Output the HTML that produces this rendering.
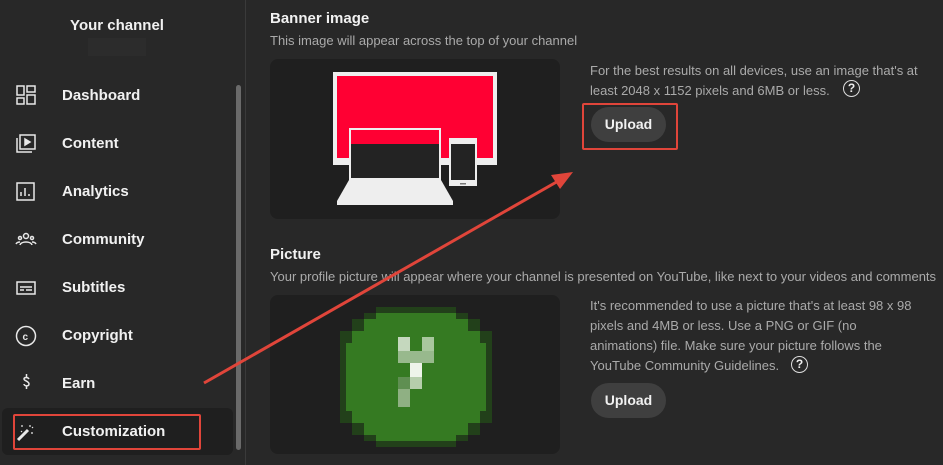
<!DOCTYPE html>
<html><head><style>
*{margin:0;padding:0;box-sizing:border-box}
body{width:943px;height:465px;background:#282828;font-family:"Liberation Sans",sans-serif;position:relative;overflow:hidden;color:#f1f1f1}
.a{position:absolute}
.nav{font-size:15px;font-weight:bold;left:62px;color:#f1f1f1}
.sub{font-size:13px;color:#aaa}
.h{font-size:15px;font-weight:bold}
.btn{background:#3f3f3f;border-radius:18px;width:75px;height:35px;font-weight:bold;font-size:14px;text-align:center;line-height:35px;color:#f1f1f1}
.box{background:#1f1f1f;border-radius:8px}
.red{border:2px solid #e0453a;border-radius:2px}
</style></head><body>
<div class="a" style="left:245px;top:0;width:1px;height:465px;background:#3a3a3a"></div>
<div class="a h" style="left:0;width:234px;text-align:center;top:17px">Your channel</div>
<div class="a" style="left:88px;top:38px;width:58px;height:18px;background:#2c2c2c"></div>
<div class="a" style="left:236px;top:85px;width:5px;height:365px;background:#6a6a6a;border-radius:3px"></div>
<div class="a" style="left:2px;top:408px;width:231px;height:47px;background:#1f1f1f;border-radius:6px"></div>
<svg class="a" style="left:0;top:0" width="245" height="465" fill="none" stroke="#e8e8e8" stroke-width="1.5">
<rect x="17" y="86" width="7" height="9"/><rect x="17" y="98" width="7" height="6"/><rect x="27" y="86" width="8" height="6"/><rect x="27" y="95" width="8" height="9"/>
<rect x="20" y="135" width="15" height="14"/><path d="M17 138v14h15"/><path d="M25 139l5 3-5 3z" fill="#e8e8e8"/>
<rect x="17" y="183" width="17" height="17"/><path d="M21 196v-4M25 196v-8M29 196v-2"/>
<circle cx="26" cy="236" r="2.5"/><path d="M20 245c1-4 11-4 12 0"/><circle cx="20" cy="238" r="1.5"/><circle cx="32" cy="238" r="1.5"/><path d="M16 244c1-2 3-2 4-2M36 244c-1-2-3-2-4-2"/>
<rect x="17" y="282" width="18" height="12"/><path d="M20 287h12M20 290h4M26 290h6"/>
<circle cx="26" cy="336" r="9.5"/><text x="22.5" y="340" font-size="10" fill="#e8e8e8" stroke="none" font-family="Liberation Sans" font-weight="bold">c</text>
<path d="M29 379c-1-2-5-2-5 0s5 2 5 5-5 2-5 0M26.5 374v3M26.5 386v3"/>
<path d="M18 440l10-10" stroke-width="3"/><path d="M22 425v2M30 425v2M33 433h-2M21 431l1 1M33 427l-1 1" stroke-width="1.2"/>
</svg>
<div class="a nav" style="top:87px">Dashboard</div>
<div class="a nav" style="top:135px">Content</div>
<div class="a nav" style="top:183px">Analytics</div>
<div class="a nav" style="top:231px">Community</div>
<div class="a nav" style="top:279px">Subtitles</div>
<div class="a nav" style="top:327px">Copyright</div>
<div class="a nav" style="top:375px">Earn</div>
<div class="a nav" style="top:423px">Customization</div>
<div class="a red" style="left:13px;top:414px;width:188px;height:36px"></div>

<div class="a h" style="left:270px;top:10px">Banner image</div>
<div class="a sub" style="left:270px;top:33px">This image will appear across the top of your channel</div>
<div class="a box" style="left:270px;top:59px;width:290px;height:160px"></div>
<svg class="a" style="left:270px;top:59px" width="290" height="160">
<rect x="63" y="13" width="164" height="93" fill="#eee"/><rect x="67" y="17" width="156" height="82" fill="#ff0033"/>
<rect x="79" y="69" width="92" height="52" fill="#eee"/><rect x="81" y="71" width="88" height="14" fill="#ff0033"/><rect x="81" y="85" width="88" height="34" fill="#232323"/>
<path d="M79 121h92l12 21v4H67v-4z" fill="#eee"/>
<rect x="179" y="79" width="28" height="48" fill="#eee"/><rect x="181" y="85" width="24" height="36" fill="#232323"/><rect x="190" y="124" width="6" height="1.5" fill="#777"/>
</svg>
<div class="a sub" style="left:590px;top:61px;line-height:20px;width:350px">For the best results on all devices, use an image that's at<br>least 2048 x 1152 pixels and 6MB or less.</div>
<div class="a" style="left:843px;top:80px;width:17px;height:17px;border:1.5px solid #ddd;border-radius:50%;font-size:12px;font-weight:bold;text-align:center;line-height:14px;color:#eee">?</div>
<div class="a btn" style="left:591px;top:107px">Upload</div>
<div class="a red" style="left:582px;top:103px;width:96px;height:47px"></div>

<div class="a h" style="left:270px;top:246px">Picture</div>
<div class="a sub" style="left:270px;top:269px">Your profile picture will appear where your channel is presented on YouTube, like next to your videos and comments</div>
<div class="a box" style="left:270px;top:295px;width:290px;height:159px"></div>
<svg class="a" style="left:270px;top:295px" width="290" height="159" shape-rendering="crispEdges">
<g fill="#22401a">
<rect x="106" y="12" width="80" height="140"/><rect x="82" y="24" width="128" height="116"/><rect x="70" y="36" width="152" height="92"/><rect x="94" y="18" width="104" height="128"/>
</g>
<g fill="#357a22">
<rect x="106" y="18" width="80" height="128"/><rect x="82" y="36" width="128" height="92"/><rect x="76" y="48" width="140" height="68"/><rect x="94" y="24" width="104" height="116"/>
</g>
<rect x="128" y="42" width="12" height="26" fill="#c5d8be"/><rect x="152" y="42" width="12" height="26" fill="#a9c79e"/>
<rect x="128" y="56" width="36" height="12" fill="#98b98d"/>
<rect x="140" y="68" width="12" height="14" fill="#eef4ea"/><rect x="140" y="82" width="12" height="12" fill="#b6ceac"/>
<rect x="128" y="82" width="12" height="30" fill="#5f8f52"/><rect x="128" y="94" width="12" height="18" fill="#8fb083"/>
</svg>
<div class="a sub" style="left:590px;top:296px;line-height:20px;width:350px">It's recommended to use a picture that's at least 98 x 98<br>pixels and 4MB or less. Use a PNG or GIF (no<br>animations) file. Make sure your picture follows the<br>YouTube Community Guidelines.</div>
<div class="a" style="left:791px;top:356px;width:17px;height:17px;border:1.5px solid #ddd;border-radius:50%;font-size:12px;font-weight:bold;text-align:center;line-height:14px;color:#eee">?</div>
<div class="a btn" style="left:591px;top:383px">Upload</div>

<svg class="a" style="left:0;top:0" width="943" height="465">
<line x1="204" y1="383" x2="560" y2="180" stroke="#e0453a" stroke-width="3"/>
<path d="M573 172l-22 3 9 14z" fill="#e0453a"/>
</svg>
</body></html>
